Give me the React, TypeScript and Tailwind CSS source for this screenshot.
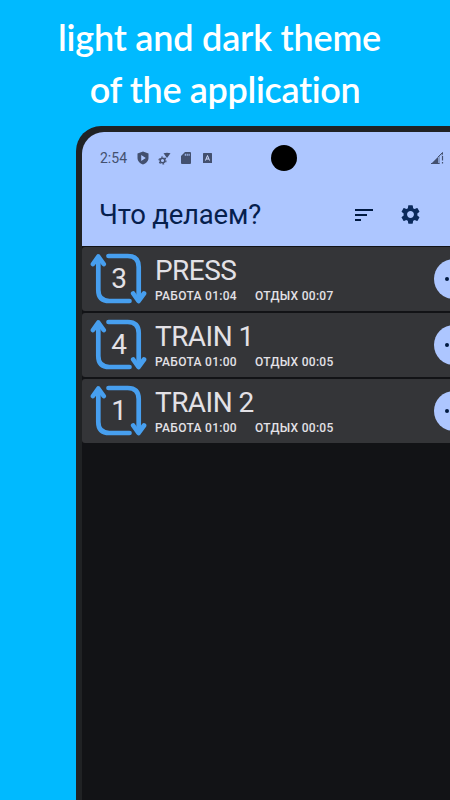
import { MdSort, MdSettings } from "react-icons/md";

type Workout = {
  name: string;
  rounds: number;
  work: string;
  rest: string;
};

const WORKOUTS: Workout[] = [
  { name: "PRESS", rounds: 3, work: "01:04", rest: "00:07" },
  { name: "TRAIN 1", rounds: 4, work: "01:00", rest: "00:05" },
  { name: "TRAIN 2", rounds: 1, work: "01:00", rest: "00:05" },
];

function RoundsBadge({ value }: { value: number }) {
  return (
    <div className="grid h-[52px] w-[58px] shrink-0 place-items-center">
      <svg
        viewBox="0 0 58 52"
        className="col-start-1 row-start-1 h-[52px] w-[58px]"
        fill="none"
        stroke="#479fef"
        strokeWidth="4.7"
        strokeLinecap="round"
        strokeLinejoin="round"
      >
        <path d="M8.300 6v31q0 11 11 11H39.500" />
        <path d="M18.500 3H37.700q11 0 11 11V46" />
        <path d="m3 11 5.300-7.500L13.700 11M43.200 40.500l5.300 7.500 5.500-7.500" />
      </svg>
      <span className="col-start-1 row-start-1 pb-px text-[28px] leading-none text-[#e3e1e6]">
        {value}
      </span>
    </div>
  );
}

function WorkoutRow({ workout }: { workout: Workout }) {
  return (
    <li className="flex h-[64px] w-[400px] shrink-0 items-center rounded-[3px] bg-[#343538] pl-[8px]">
      <RoundsBadge value={workout.rounds} />
      <div className="ml-[7px] flex w-[279px] flex-col pt-[2px] text-[#e3e1e6]">
        <span className="text-[28px] leading-[32px] tracking-[-0.550px]">
          {workout.name}
        </span>
        <span className="flex gap-[18px] text-[12px] leading-[18px] font-medium tracking-[0.300px] whitespace-nowrap">
          <span>РАБОТА {workout.work}</span>
          <span>ОТДЫХ {workout.rest}</span>
        </span>
      </div>
      <button
        type="button"
        aria-label="Меню"
        className="flex size-[40px] shrink-0 items-center justify-center gap-[3px] rounded-full bg-[#adc6ff]"
      >
        <i className="size-[4px] rounded-full bg-[#001a41]" />
        <i className="size-[4px] rounded-full bg-[#001a41]" />
        <i className="size-[4px] rounded-full bg-[#001a41]" />
      </button>
    </li>
  );
}

function StatusBar() {
  return (
    <div className="flex h-[51px] items-center pt-px pl-[18px] text-[#43506f]">
      <span className="w-[37px] pt-px text-[14px]">2:54</span>
      <svg viewBox="0 0 12 14" className="h-[14px] w-[12px]">
        <path
          fill="currentColor"
          fillRule="evenodd"
          d="M6 .5 11.500 2.500V7c0 3-2.300 5.500-5.500 6.500C2.800 12.500.5 10 .5 7V2.500ZM4.200 4v6l4.600-3Z"
        />
      </svg>
      <svg viewBox="0 0 13 13" className="ml-[9px] h-[13px] w-[13px]">
        <path d="M5.500 1.200Q9 .1 12.500 1.200L9 6Z" fill="currentColor" />
        <circle
          cx="4.500"
          cy="8.500"
          r="2.300"
          fill="none"
          stroke="currentColor"
          strokeWidth="1.500"
        />
        <circle
          cx="4.500"
          cy="8.500"
          r="3.500"
          fill="none"
          stroke="currentColor"
          strokeWidth="1.200"
          strokeDasharray="1.800 1.865"
        />
      </svg>
      <svg viewBox="0 0 10 12" className="ml-[10px] h-[12px] w-[10px]">
        <path
          fill="currentColor"
          d="M4 0h5q1 0 1 1v10q0 1-1 1H1q-1 0-1-1V4Z"
        />
        <path d="M4.300 1.800v2M6.200 1.800v2M8.100 1.800v2" stroke="#adc6ff" />
      </svg>
      <svg viewBox="0 0 9 10" className="ml-[12px] h-[10px] w-[9px]">
        <rect width="9" height="10" rx="0.500" fill="currentColor" />
        <path
          d="m2.500 7.500 2-5 2 5M3.300 6h2.400"
          fill="none"
          stroke="#d5e0ff"
        />
      </svg>
      <svg viewBox="0 0 13 12" className="ml-[219px] h-[12px] w-[13px]">
        <path d="M0 12 12 0v3.500H9V12Z" fill="currentColor" opacity="0.350" />
        <path d="M0 12 7 5v7Z" fill="currentColor" />
        <path d="M0 11.500h8.500M7 5l4.500-4.500v2" fill="none" stroke="currentColor" />
        <path
          d="M11.500 4v4.500M11.500 10v1.500"
          stroke="currentColor"
          strokeWidth="1.200"
        />
      </svg>
    </div>
  );
}

export default function App() {
  return (
    <div className="relative flex h-[800px] w-[450px] flex-col overflow-hidden bg-[#00baff] font-['Roboto',sans-serif]">
      <h1 className="h-[126px] shrink-0 pt-[11px] text-center font-['Lato',sans-serif] text-[36px] leading-[52px] font-semibold text-white [font-variant-ligatures:none]">
        <span className="block pr-[11px] tracking-[-0.200px]">
          light and dark theme
        </span>
        <span className="block tracking-[-0.350px]">of the application</span>
      </h1>

      <div className="ml-[76px] h-[720px] w-[480px] shrink-0 rounded-tl-[25px] bg-[#202224] pt-[6px] pl-[6px]">
        <div className="h-full overflow-hidden rounded-tl-[22px] bg-[#121316]">
          <header className="h-[114px] bg-[#adc6ff]">
            <StatusBar />
            <div className="flex h-[63px] items-center pl-[17px] text-[#001a41]">
              <span className="w-[253px] text-[27.500px] leading-[32px] tracking-[-0.180px] whitespace-nowrap text-[#06204d]">
                Что делаем?
              </span>
              <MdSort className="size-[24px]" />
              <MdSettings className="ml-[23px] size-[23px] text-[#0b2a5c]" />
            </div>
          </header>
          <ul className="flex flex-col gap-[2.200px] pt-px">
            {WORKOUTS.map((workout) => (
              <WorkoutRow key={workout.name} workout={workout} />
            ))}
          </ul>
        </div>
      </div>

      {/* front camera */}
      <div className="absolute top-[145px] left-[271px] size-[26px] rounded-full bg-black" />
    </div>
  );
}
